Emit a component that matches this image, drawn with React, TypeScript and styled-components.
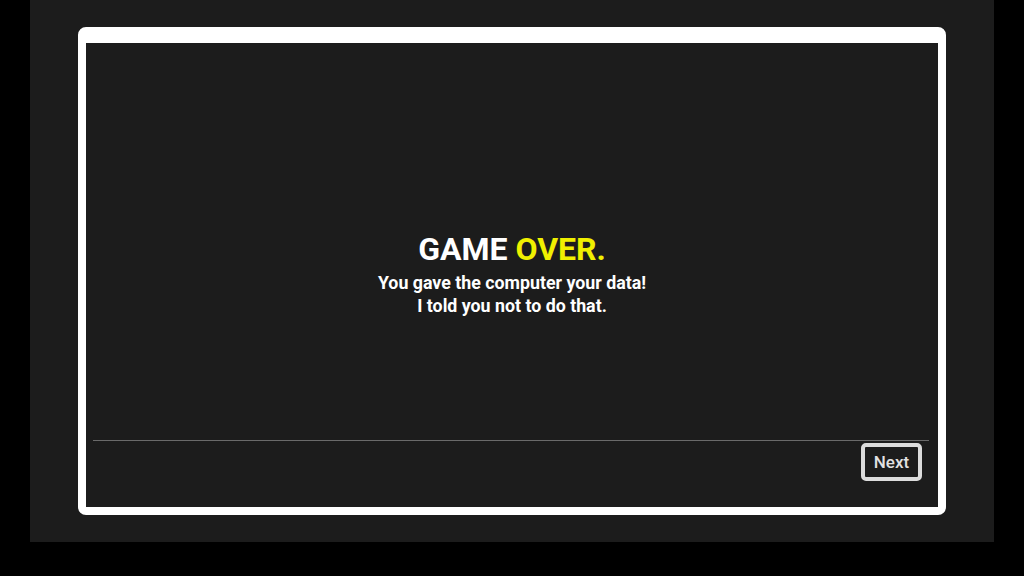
import React from "react";
import styled, { createGlobalStyle } from "styled-components";

const GlobalStyle = createGlobalStyle`
  html, body {
    margin: 0;
    padding: 0;
    background: #000;
  }
  body {
    font-family: Roboto, "Liberation Sans", Arial, sans-serif;
  }
`;

const Stage = styled.div`
  width: 964px;
  height: 542px;
  margin: 0 auto;
  padding: 27px 48px;
  box-sizing: border-box;
  background: #1c1c1c;
`;

const Frame = styled.div`
  height: 100%;
  box-sizing: border-box;
  display: flex;
  flex-direction: column;
  border: 8px solid #fff;
  border-top-width: 16px;
  border-radius: 8px;
  background: #1c1c1c;
`;

const Screen = styled.main`
  flex: 1;
  display: flex;
  flex-direction: column;
  align-items: center;
  justify-content: center;
  padding-top: 64px;
  text-align: center;
  color: #fff;
`;

const Title = styled.h1`
  margin: 0 0 4px;
  font-size: 32px;
  line-height: 36px;
  font-weight: 700;
  color: #fff;
`;

const Highlight = styled.span`
  color: #f0f000;
`;

const Message = styled.p`
  margin: 0;
  font-size: 17.8px;
  line-height: 23px;
  font-weight: 700;
  color: #fff;
`;

const Divider = styled.hr`
  margin: 0 9px 0 7px;
  border: none;
  border-top: 1px solid #6a6a6a;
`;

const Footer = styled.footer`
  display: flex;
  justify-content: flex-end;
  padding: 2px 16px 26px;
`;

const NextButton = styled.button`
  width: 61px;
  height: 38px;
  box-sizing: border-box;
  border: 4px solid #dcdcdc;
  border-radius: 5px;
  background: #1c1c1c;
  color: #e2e2e2;
  font-family: Roboto, "Liberation Sans", Arial, sans-serif;
  font-size: 17px;
  font-weight: 500;
  padding: 0;
  cursor: pointer;
`;

export default function App() {
  return (
    <>
      <GlobalStyle />
      <Stage>
        <Frame>
          <Screen>
            <Title>
              GAME <Highlight>OVER.</Highlight>
            </Title>
            <Message>You gave the computer your data!</Message>
            <Message>I told you not to do that.</Message>
          </Screen>
          <Divider />
          <Footer>
            <NextButton>Next</NextButton>
          </Footer>
        </Frame>
      </Stage>
    </>
  );
}
